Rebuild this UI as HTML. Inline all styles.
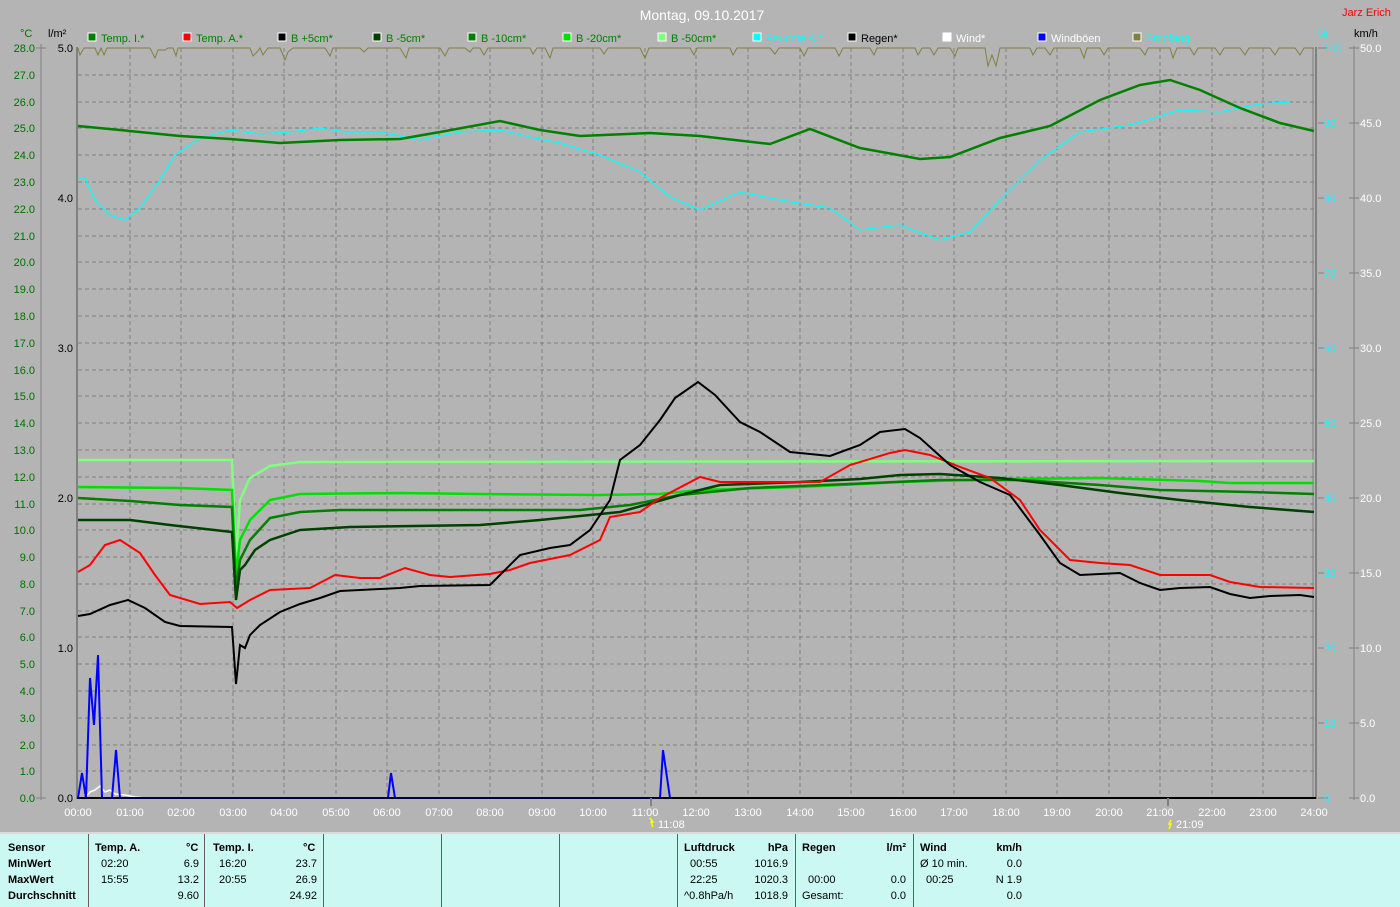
<!DOCTYPE html>
<html><head><meta charset="utf-8"><style>
html,body{margin:0;padding:0;background:#b4b4b4;}
body{width:1400px;height:907px;overflow:hidden;position:relative;font-family:"Liberation Sans",sans-serif;}
svg text{font-family:"Liberation Sans",sans-serif;}
#panel{position:absolute;left:0;top:834px;width:1400px;height:73px;background:#ccf8f4;font-size:11px;color:#000;}
.c{position:absolute;top:0;height:73px;border-left:1px solid #606060;}
.t{position:absolute;white-space:nowrap;}
.b{font-weight:bold;}
</style></head><body>
<svg width="1400" height="834" style="position:absolute;left:0;top:0">
<g id="grid" stroke="#808080" stroke-width="1" stroke-dasharray="4,3" fill="none"></g>
<g stroke="#808080" stroke-width="1" stroke-dasharray="4,3" fill="none">
<path d="M78 75H1314M78 102H1314M78 128H1314M78 155H1314M78 182H1314M78 209H1314M78 236H1314M78 262H1314M78 289H1314M78 316H1314M78 343H1314M78 370H1314M78 396H1314M78 423H1314M78 450H1314M78 477H1314M78 504H1314M78 530H1314M78 557H1314M78 584H1314M78 611H1314M78 637H1314M78 664H1314M78 691H1314M78 718H1314M78 745H1314M78 771H1314"/>
<path d="M130 48V798M181 48V798M233 48V798M284 48V798M336 48V798M387 48V798M439 48V798M490 48V798M542 48V798M593 48V798M645 48V798M696 48V798M748 48V798M800 48V798M851 48V798M903 48V798M954 48V798M1006 48V798M1057 48V798M1109 48V798M1160 48V798M1212 48V798M1263 48V798"/>
</g>
<!-- frames -->
<path d="M77 47V799" stroke="#808080" stroke-width="2"/>
<path d="M1316 47V799" stroke="#808080" stroke-width="2"/>
<path d="M1313 48V798" stroke="#808080" stroke-width="1"/>
<path d="M77 798H1316" stroke="#000" stroke-width="2"/>
<path d="M41 44V800" stroke="#808080"/>
<path d="M1354 46V800" stroke="#808080"/>
<g stroke="#808080">
<path d="M36 48H46M36 798H46M1318 48H1328M1318 798H1328M1349 48H1359M1349 123H1359M1349 198H1359M1349 273H1359M1349 348H1359M1349 423H1359M1349 498H1359M1349 573H1359M1349 648H1359M1349 723H1359M1349 798H1359M1318 123H1324M1318 198H1324M1318 273H1324M1318 348H1324M1318 423H1324M1318 498H1324M1318 573H1324M1318 648H1324M1318 723H1324"/>
</g>
<!-- left labels -->
<g font-size="11" fill="#007000" text-anchor="end">
<text x="35" y="52">28.0</text><text x="35" y="79">27.0</text><text x="35" y="106">26.0</text><text x="35" y="132">25.0</text><text x="35" y="159">24.0</text><text x="35" y="186">23.0</text><text x="35" y="213">22.0</text><text x="35" y="240">21.0</text><text x="35" y="266">20.0</text><text x="35" y="293">19.0</text><text x="35" y="320">18.0</text><text x="35" y="347">17.0</text><text x="35" y="374">16.0</text><text x="35" y="400">15.0</text><text x="35" y="427">14.0</text><text x="35" y="454">13.0</text><text x="35" y="481">12.0</text><text x="35" y="508">11.0</text><text x="35" y="534">10.0</text><text x="35" y="561">9.0</text><text x="35" y="588">8.0</text><text x="35" y="615">7.0</text><text x="35" y="641">6.0</text><text x="35" y="668">5.0</text><text x="35" y="695">4.0</text><text x="35" y="722">3.0</text><text x="35" y="749">2.0</text><text x="35" y="775">1.0</text><text x="35" y="802">0.0</text>
</g>
<text x="20" y="37" font-size="11" fill="#007000">°C</text>
<text x="48" y="37" font-size="11" fill="#000">l/m²</text>
<g font-size="11" fill="#000" text-anchor="end">
<text x="73" y="52">5.0</text><text x="73" y="202">4.0</text><text x="73" y="352">3.0</text><text x="73" y="502">2.0</text><text x="73" y="652">1.0</text><text x="73" y="802">0.0</text>
</g>
<g font-size="11" fill="#00ffff">
<text x="1324" y="52">100</text><text x="1324" y="127">90</text><text x="1324" y="202">80</text><text x="1324" y="277">70</text><text x="1324" y="352">60</text><text x="1324" y="427">50</text><text x="1324" y="502">40</text><text x="1324" y="577">30</text><text x="1324" y="652">20</text><text x="1324" y="727">10</text><text x="1324" y="802">0</text>
<text x="1318" y="37">%</text>
</g>
<g font-size="11" fill="#fff">
<text x="1360" y="52">50.0</text><text x="1360" y="127">45.0</text><text x="1360" y="202">40.0</text><text x="1360" y="277">35.0</text><text x="1360" y="352">30.0</text><text x="1360" y="427">25.0</text><text x="1360" y="502">20.0</text><text x="1360" y="577">15.0</text><text x="1360" y="652">10.0</text><text x="1360" y="727">5.0</text><text x="1360" y="802">0.0</text>
</g>
<text x="1354" y="37" font-size="11" fill="#000">km/h</text>
<text x="702" y="20" font-size="14" fill="#fff" text-anchor="middle">Montag, 09.10.2017</text>
<text x="1342" y="16" font-size="11" fill="#ff0000">Jarz Erich</text>
<!-- legend -->
<g font-size="11">
<rect x="88" y="33" width="8" height="8" fill="#008000" stroke="#fff"/><text x="101" y="42" fill="#008000">Temp. I.*</text>
<rect x="183" y="33" width="8" height="8" fill="#f00" stroke="#fff"/><text x="196" y="42" fill="#008000">Temp. A.*</text>
<rect x="278" y="33" width="8" height="8" fill="#000" stroke="#fff"/><text x="291" y="42" fill="#008000">B +5cm*</text>
<rect x="373" y="33" width="8" height="8" fill="#004000" stroke="#fff"/><text x="386" y="42" fill="#008000">B -5cm*</text>
<rect x="468" y="33" width="8" height="8" fill="#008000" stroke="#fff"/><text x="481" y="42" fill="#008000">B -10cm*</text>
<rect x="563" y="33" width="8" height="8" fill="#00e000" stroke="#fff"/><text x="576" y="42" fill="#008000">B -20cm*</text>
<rect x="658" y="33" width="8" height="8" fill="#80ff80" stroke="#fff"/><text x="671" y="42" fill="#008000">B -50cm*</text>
<rect x="753" y="33" width="8" height="8" fill="#00ffff" stroke="#fff"/><text x="766" y="42" fill="#00ffff">Feuchte A.*</text>
<rect x="848" y="33" width="8" height="8" fill="#000" stroke="#fff"/><text x="861" y="42" fill="#000">Regen*</text>
<rect x="943" y="33" width="8" height="8" fill="#fff" stroke="#fff"/><text x="956" y="42" fill="#fff">Wind*</text>
<rect x="1038" y="33" width="8" height="8" fill="#0000ff" stroke="#fff"/><text x="1051" y="42" fill="#fff">Windböen</text>
<rect x="1133" y="33" width="8" height="8" fill="#808040" stroke="#fff"/><text x="1146" y="42" fill="#00ffff">Empfang</text>
</g>
<!-- empfang -->
<polyline fill="none" stroke="#808040" stroke-width="1" points="78,48 80,55 84,48 95,48 98,55 101,48 104,55 107,48 150,48 155,58 158,50 165,50 168,48 173,48 176,56 178,48 250,48 253,56 257,52 260,48 263,55 265,52 268,48 280,48 285,60 288,52 293,48 325,48 330,56 333,48 360,48 364,52 368,48 400,48 406,58 409,48 440,48 445,56 449,48 465,48 470,52 473,48 480,48 484,55 488,48 530,48 533,54 537,48 545,48 550,58 553,48 600,48 604,54 608,48 640,48 645,58 649,48 690,48 694,55 697,48 730,48 733,55 737,48 770,48 775,54 779,48 800,48 804,56 808,48 835,48 839,56 843,48 870,48 874,55 877,48 915,48 918,55 922,48 930,48 934,55 938,48 950,48 955,56 958,48 985,48 988,66 992,55 996,66 1000,48 1030,48 1033,55 1037,48 1045,48 1050,55 1054,48 1080,48 1084,58 1087,48 1100,48 1104,55 1108,48 1140,48 1145,55 1148,48 1170,48 1173,58 1177,48 1190,48 1194,55 1198,48 1215,48 1220,55 1224,48 1240,48 1245,55 1249,48 1270,48 1275,55 1279,48 1295,48 1300,55 1304,48 1314,48"/>
<!-- humidity -->
<polyline fill="none" stroke="#00ffff" stroke-width="1.3" points="78,178 85,178 95,200 110,215 125,220 140,208 160,180 175,155 200,138 230,130 260,134 290,132 320,128 345,132 380,132 420,140 460,132 500,130 530,137 560,143 600,155 640,172 670,197 700,210 740,192 780,200 830,208 860,230 900,225 940,240 970,232 1000,200 1040,160 1080,132 1130,125 1180,110 1220,112 1260,104 1290,102"/>
<!-- temp I -->
<polyline fill="none" stroke="#008000" stroke-width="2.5" points="78,126 120,130 180,136 230,139 280,143 340,140 400,139 440,132 500,121 540,130 580,136 650,133 700,136 770,144 810,129 860,148 920,159 950,157 1000,138 1050,126 1100,100 1140,85 1170,80 1200,90 1240,108 1280,123 1314,131"/>
<!-- soil temps -->
<polyline fill="none" stroke="#80ff80" stroke-width="2.5" points="78,460 232,460 236,560 240,500 250,478 270,466 300,462 1314,461"/>
<polyline fill="none" stroke="#00e000" stroke-width="2.5" points="78,487 180,488 232,490 236,575 240,540 250,520 270,500 300,494 400,493 480,494 600,495 660,494 700,490 800,487 900,482 1000,479 1100,478 1200,481 1230,483 1314,483"/>
<polyline fill="none" stroke="#008000" stroke-width="2.5" points="78,498 130,501 180,505 232,507 236,590 240,560 250,540 270,518 300,512 340,510 580,510 630,505 680,495 750,488 850,484 940,480 1020,480 1100,485 1160,490 1250,492 1314,494"/>
<polyline fill="none" stroke="#004000" stroke-width="2.5" points="78,520 130,520 170,525 232,532 236,600 240,570 245,565 255,550 270,540 300,530 350,527 480,525 540,520 620,512 680,495 720,485 800,482 860,479 900,475 940,474 1000,478 1060,485 1120,493 1180,500 1250,507 1314,512"/>
<polyline fill="none" stroke="#ff0000" stroke-width="2" points="78,572 90,565 105,545 120,540 140,553 155,575 170,595 200,604 230,602 237,608 250,600 270,590 310,588 335,575 360,578 380,578 405,568 430,575 450,577 490,574 510,570 530,563 570,555 600,540 610,517 640,512 660,498 700,477 720,482 760,482 820,482 850,465 890,453 905,450 930,455 960,467 990,478 1020,500 1040,530 1070,560 1100,563 1130,565 1160,575 1210,575 1230,582 1260,587 1314,588"/>
<polyline fill="none" stroke="#000" stroke-width="2" points="78,616 90,614 110,605 128,600 145,608 165,622 180,626 232,627 236,684 240,645 245,648 250,635 260,625 280,612 300,604 320,598 340,591 360,590 400,588 420,586 490,585 500,575 520,555 550,548 570,545 590,530 610,500 620,460 640,445 660,420 675,398 698,382 715,395 740,422 760,432 790,452 830,456 860,445 880,432 905,429 920,438 950,465 980,482 1010,495 1040,535 1060,563 1080,575 1120,573 1140,583 1160,590 1180,588 1210,587 1230,594 1250,598 1270,596 1300,595 1314,597"/>
<!-- wind -->
<polyline fill="none" stroke="#fff" stroke-width="1.5" points="85,798 90,792 95,790 100,786 105,792 110,790 115,794 125,795 135,797 145,798"/>
<polyline fill="none" stroke="#0000ff" stroke-width="2" points="78,798 82,773 86,798 90,678 94,725 98,655 102,798 112,798 116,750 120,798 388,798 391,773 395,798 660,798 663,750 670,798"/>
<path d="M78 798H1314" stroke="#000" stroke-width="1.5"/>
<!-- x labels -->
<g font-size="11" fill="#fff" text-anchor="middle">
<text x="78" y="816">00:00</text><text x="130" y="816">01:00</text><text x="181" y="816">02:00</text><text x="233" y="816">03:00</text><text x="284" y="816">04:00</text><text x="336" y="816">05:00</text><text x="387" y="816">06:00</text><text x="439" y="816">07:00</text><text x="490" y="816">08:00</text><text x="542" y="816">09:00</text><text x="593" y="816">10:00</text><text x="645" y="816">11:00</text><text x="696" y="816">12:00</text><text x="748" y="816">13:00</text><text x="800" y="816">14:00</text><text x="851" y="816">15:00</text><text x="903" y="816">16:00</text><text x="954" y="816">17:00</text><text x="1006" y="816">18:00</text><text x="1057" y="816">19:00</text><text x="1109" y="816">20:00</text><text x="1160" y="816">21:00</text><text x="1212" y="816">22:00</text><text x="1263" y="816">23:00</text><text x="1314" y="816">24:00</text>
</g>
<path d="M651 798V806M1168 798V806" stroke="#808080" stroke-width="2"/>
<text x="658" y="828" font-size="11" fill="#fff">11:08</text>
<text x="1176" y="828" font-size="11" fill="#fff">21:09</text>
<path d="M650 818l3 4-2 0 2 5" stroke="#ff0" fill="none" stroke-width="1.5"/>
<path d="M1171 820l-2 4 2 0-2 5" stroke="#ff0" fill="none" stroke-width="1.5"/>
<path d="M0 833H1400" stroke="#fff" stroke-width="1"/>
</svg>
<div id="panel">
<div class="c" style="left:88px"></div><div class="c" style="left:204px"></div><div class="c" style="left:323px"></div><div class="c" style="left:441px"></div><div class="c" style="left:559px"></div><div class="c" style="left:677px"></div><div class="c" style="left:795px"></div><div class="c" style="left:913px"></div>
<div class="t b" style="left:8px;top:8px">Sensor</div>
<div class="t b" style="left:8px;top:24px">MinWert</div>
<div class="t b" style="left:8px;top:40px">MaxWert</div>
<div class="t b" style="left:8px;top:56px">Durchschnitt</div>
<div class="t b" style="left:95px;top:8px">Temp. A.</div><div class="t b" style="left:186px;top:8px">°C</div>
<div class="t" style="left:101px;top:24px">02:20</div><div class="t" style="right:1201px;top:24px">6.9</div>
<div class="t" style="left:101px;top:40px">15:55</div><div class="t" style="right:1201px;top:40px">13.2</div>
<div class="t" style="right:1201px;top:56px">9.60</div>
<div class="t b" style="left:213px;top:8px">Temp. I.</div><div class="t b" style="left:303px;top:8px">°C</div>
<div class="t" style="left:219px;top:24px">16:20</div><div class="t" style="right:1083px;top:24px">23.7</div>
<div class="t" style="left:219px;top:40px">20:55</div><div class="t" style="right:1083px;top:40px">26.9</div>
<div class="t" style="right:1083px;top:56px">24.92</div>
<div class="t b" style="left:684px;top:8px">Luftdruck</div><div class="t b" style="right:612px;top:8px">hPa</div>
<div class="t" style="left:690px;top:24px">00:55</div><div class="t" style="right:612px;top:24px">1016.9</div>
<div class="t" style="left:690px;top:40px">22:25</div><div class="t" style="right:612px;top:40px">1020.3</div>
<div class="t" style="left:684px;top:56px">^0.8hPa/h</div><div class="t" style="right:612px;top:56px">1018.9</div>
<div class="t b" style="left:802px;top:8px">Regen</div><div class="t b" style="right:494px;top:8px">l/m²</div>
<div class="t" style="left:808px;top:40px">00:00</div><div class="t" style="right:494px;top:40px">0.0</div>
<div class="t" style="left:802px;top:56px">Gesamt:</div><div class="t" style="right:494px;top:56px">0.0</div>
<div class="t b" style="left:920px;top:8px">Wind</div><div class="t b" style="right:378px;top:8px">km/h</div>
<div class="t" style="left:920px;top:24px">Ø 10 min.</div><div class="t" style="right:378px;top:24px">0.0</div>
<div class="t" style="left:926px;top:40px">00:25</div><div class="t" style="right:378px;top:40px">N 1.9</div>
<div class="t" style="right:378px;top:56px">0.0</div>
</div>
</body></html>
